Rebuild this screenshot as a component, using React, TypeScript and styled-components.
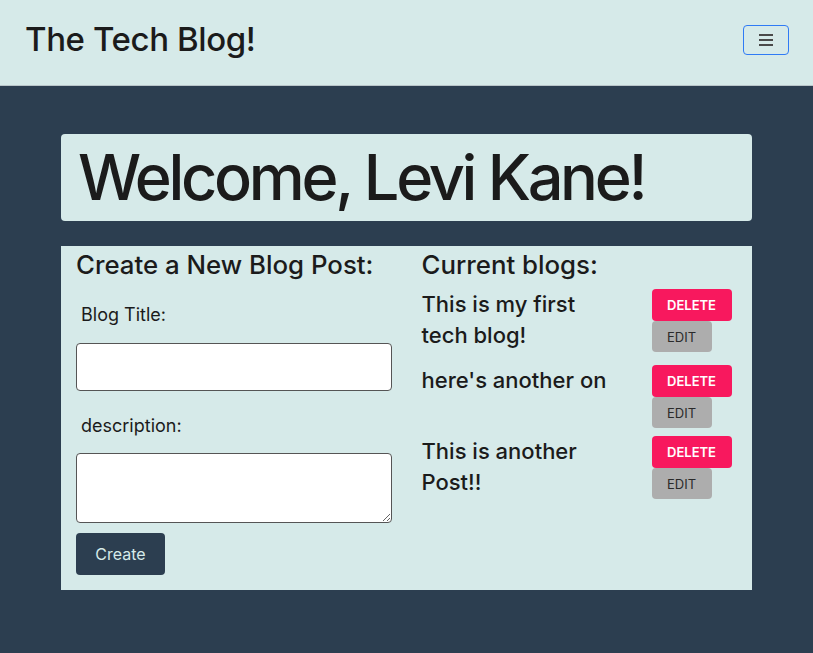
import React from "react";
import styled, { createGlobalStyle } from "styled-components";

const Global = createGlobalStyle`
  html, body { margin: 0; padding: 0; }
  body {
    background: #2c3e50;
    font-family: Inter, "Noto Sans", sans-serif;
    color: #1b1b1b;
    min-height: 653px;
  }
  * { box-sizing: border-box; }
`;

const Header = styled.header`
  height: 86px;
  background: #d6eae9;
  border-bottom: 1px solid #b9c5c9;
  display: flex;
  align-items: center;
  justify-content: space-between;
  padding: 0 24px 6px 25px;
`;

const Brand = styled.h1`
  margin: 0;
  font-size: 33px;
  font-weight: 500;
  letter-spacing: -0.4px;
  line-height: 1.2;
`;

const Toggler = styled.button`
  width: 46px;
  height: 30px;
  border: 1px solid #2f7bf5;
  border-radius: 4px;
  background: transparent;
  display: flex;
  flex-direction: column;
  align-items: center;
  justify-content: center;
  gap: 3px;
  padding: 0;
`;

const Bar = styled.span`
  width: 14px;
  height: 2px;
  background: #4a4a4a;
`;

const Main = styled.main`
  padding: 48px 61px 60px 61px;
`;

const Welcome = styled.div`
  background: #d6eae9;
  border-radius: 4px;
  height: 87px;
  display: flex;
  align-items: center;
  padding: 0 17px;
`;

const WelcomeText = styled.h2`
  margin: 0;
  font-size: 63px;
  font-weight: 500;
  letter-spacing: -3.3px;
  line-height: 1;
`;

const Panel = styled.section`
  margin-top: 25px;
  background: #d6eae9;
  display: grid;
  grid-template-columns: 1fr 1fr;
  padding: 4px 0 15px;
`;

const Column = styled.div`
  padding: 0 15px;
  display: flex;
  flex-direction: column;
  align-items: flex-start;
`;

const SectionTitle = styled.h3`
  margin: 0;
  font-size: 25.8px;
  font-weight: 500;
  line-height: 30px;
`;

const Label = styled.label<{ $top: number }>`
  margin: ${(p) => p.$top}px 0 0 5px;
  font-size: 18px;
  line-height: 27px;
`;

const TextInput = styled.input`
  margin-top: 15px;
  width: 100%;
  height: 48px;
  border: 1px solid #555;
  border-radius: 4px;
  background: #fff;
`;

const TextArea = styled.textarea`
  margin-top: 14px;
  width: 100%;
  height: 70px;
  border: 1px solid #555;
  border-radius: 4px;
  background: #fff;
  display: block;
`;

const CreateButton = styled.button`
  margin-top: 10px;
  width: 89px;
  height: 42px;
  border: none;
  border-radius: 4px;
  background: #2c3e50;
  color: #d6eae9;
  font-family: Inter, sans-serif;
  font-size: 16px;
`;

const BlogList = styled.div`
  margin-top: 9px;
  display: flex;
  flex-direction: column;
  width: 100%;
`;

const BlogItem = styled.div`
  display: grid;
  grid-template-columns: 200px 1fr;
  column-gap: 30px;
  margin-bottom: 8px;
`;

const BlogTitle = styled.div`
  font-size: 22px;
  font-weight: 500;
  line-height: 31px;
  margin-bottom: 6px;
`;

const Actions = styled.div`
  display: flex;
  flex-direction: column;
  align-items: flex-start;
`;

const ActionButton = styled.button<{ $variant: "delete" | "edit" }>`
  border: none;
  border-radius: 4px;
  font-family: Inter, sans-serif;
  font-size: 13px;
  text-transform: uppercase;
  padding: 0;
  width: ${(p) => (p.$variant === "delete" ? "80px" : "60px")};
  height: ${(p) => (p.$variant === "delete" ? "32px" : "31px")};
  background: ${(p) => (p.$variant === "delete" ? "#f8185e" : "#adadad")};
  color: ${(p) => (p.$variant === "delete" ? "#ffffff" : "#2a2a2a")};
  font-weight: ${(p) => (p.$variant === "delete" ? 600 : 400)};
`;

const blogs = ["This is my first tech blog!", "here's another on", "This is another Post!!"];

export default function App() {
  return (
    <>
      <Global />
      <Header>
        <Brand>The Tech Blog!</Brand>
        <Toggler aria-label="menu">
          <Bar />
          <Bar />
          <Bar />
        </Toggler>
      </Header>
      <Main>
        <Welcome>
          <WelcomeText>Welcome, Levi Kane!</WelcomeText>
        </Welcome>
        <Panel>
          <Column>
            <SectionTitle>Create a New Blog Post:</SectionTitle>
            <Label $top={21}>Blog Title:</Label>
            <TextInput type="text" />
            <Label $top={21}>description:</Label>
            <TextArea />
            <CreateButton>Create</CreateButton>
          </Column>
          <Column>
            <SectionTitle>Current blogs:</SectionTitle>
            <BlogList>
              {blogs.map((b) => (
                <BlogItem key={b}>
                  <BlogTitle>{b}</BlogTitle>
                  <Actions>
                    <ActionButton $variant="delete">Delete</ActionButton>
                    <ActionButton $variant="edit">Edit</ActionButton>
                  </Actions>
                </BlogItem>
              ))}
            </BlogList>
          </Column>
        </Panel>
      </Main>
    </>
  );
}
